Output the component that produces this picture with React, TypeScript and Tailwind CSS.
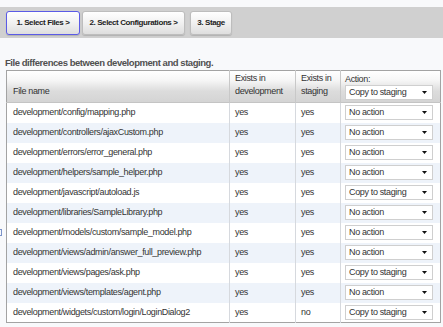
import React from "react";

const rows = [
  { file: "development/config/mapping.php", dev: "yes", stg: "yes", action: "No action" },
  { file: "development/controllers/ajaxCustom.php", dev: "yes", stg: "yes", action: "No action" },
  { file: "development/errors/error_general.php", dev: "yes", stg: "yes", action: "No action" },
  { file: "development/helpers/sample_helper.php", dev: "yes", stg: "yes", action: "No action" },
  { file: "development/javascript/autoload.js", dev: "yes", stg: "yes", action: "Copy to staging" },
  { file: "development/libraries/SampleLibrary.php", dev: "yes", stg: "yes", action: "No action" },
  { file: "development/models/custom/sample_model.php", dev: "yes", stg: "yes", action: "No action" },
  { file: "development/views/admin/answer_full_preview.php", dev: "yes", stg: "yes", action: "No action" },
  { file: "development/views/pages/ask.php", dev: "yes", stg: "yes", action: "Copy to staging" },
  { file: "development/views/templates/agent.php", dev: "yes", stg: "yes", action: "No action" },
  { file: "development/widgets/custom/login/LoginDialog2", dev: "yes", stg: "no", action: "Copy to staging" },
];

// fake select box, the native one renders differently per browser
const Select = ({ value }: { value: string }) => (
  <div className="flex h-[15px] w-[88px] items-center justify-between border border-[#cfcfcf] bg-white pl-[3px] pr-[5px] leading-none">
    <span>{value}</span>
    <svg width="5" height="3" viewBox="0 0 5 3">
      <path d="M0 0h5L2.5 3z" fill="#111" />
    </svg>
  </div>
);

const stepBtn =
  "h-[24px] whitespace-nowrap rounded-[3px] border bg-[linear-gradient(to_bottom,#ffffff,#f1f1f1_50%,#dedede)] text-[8px] font-bold tracking-[-0.4px] text-[#222] shadow-[0_1px_1px_rgba(0,0,0,0.15)]";

export default function App() {
  return (
    <div
      className="relative h-[327px] w-[443px] overflow-hidden bg-[#f8f9fb] pt-[7px] text-[9px] tracking-[-0.35px] text-[#333]"
      style={{ fontFamily: '"Liberation Sans", Arial, sans-serif' }}
    >
      {/* Wizard steps */}
      <div className="flex h-[31px] items-start bg-[#d0d0d0] pl-[6px] pt-[4px]">
        <button className={`${stepBtn} w-[74px] border-[#5b5be6]`}>1. Select Files &gt;</button>
        <button className={`${stepBtn} ml-[2px] w-[103px] border-[#bdbdbd]`}>2. Select Configurations &gt;</button>
        <button className={`${stepBtn} ml-[5px] w-[42px] border-[#bdbdbd]`}>3. Stage</button>
      </div>

      <h2 className="ml-[5px] mt-[19px] text-[9.5px] font-bold leading-[12px] tracking-[-0.45px] text-[#505050]">
        File differences between development and staging.
      </h2>

      <table className="ml-[6px] mt-[1px] w-[435px] table-fixed border-collapse border border-[#a3a3a3]">
        <colgroup>
          <col className="w-[223px]" />
          <col className="w-[66px]" />
          <col className="w-[45px]" />
          <col />
        </colgroup>
        <thead>
          <tr className="h-[32px] border-b border-[#c4c4c4] bg-[linear-gradient(to_bottom,#ffffff,#f6f6f6_30%,#dcdcdc_65%,#d4d4d4)] text-left align-bottom">
            <th className="pb-[4px] pl-[6px] font-normal leading-[13px]">File name</th>
            <th className="border-l border-[#c8c8c8] pb-[4px] pl-[5px] font-normal leading-[13px]">
              Exists in
              <br />
              development
            </th>
            <th className="border-l border-[#c8c8c8] pb-[4px] pl-[5px] font-normal leading-[13px]">
              Exists in
              <br />
              staging
            </th>
            <th className="border-l border-[#c8c8c8] pb-[2px] pl-[4px] font-normal leading-[12px]">
              Action:
              <div className="mt-[0px]">
                <Select value="Copy to staging" />
              </div>
            </th>
          </tr>
        </thead>
        <tbody>
          {rows.map((r, i) => (
            <tr key={r.file} className={`h-[20px] ${i % 2 === 1 ? "bg-[#eef3fa]" : "bg-white"}`}>
              <td className="whitespace-nowrap pl-[6px]">{r.file}</td>
              <td className="border-l border-[#d6d9de] pl-[5px]">{r.dev}</td>
              <td className="border-l border-[#d6d9de] pl-[5px]">{r.stg}</td>
              <td className="border-l border-[#d6d9de] pl-[4px]">
                <Select value={r.action} />
              </td>
            </tr>
          ))}
        </tbody>
      </table>

      {/* stray bit of a control peeking in from the left edge */}
      <span className="absolute left-[-3px] top-[229px] h-[7px] w-[5px] border border-[#7b93c9]" />
    </div>
  );
}
